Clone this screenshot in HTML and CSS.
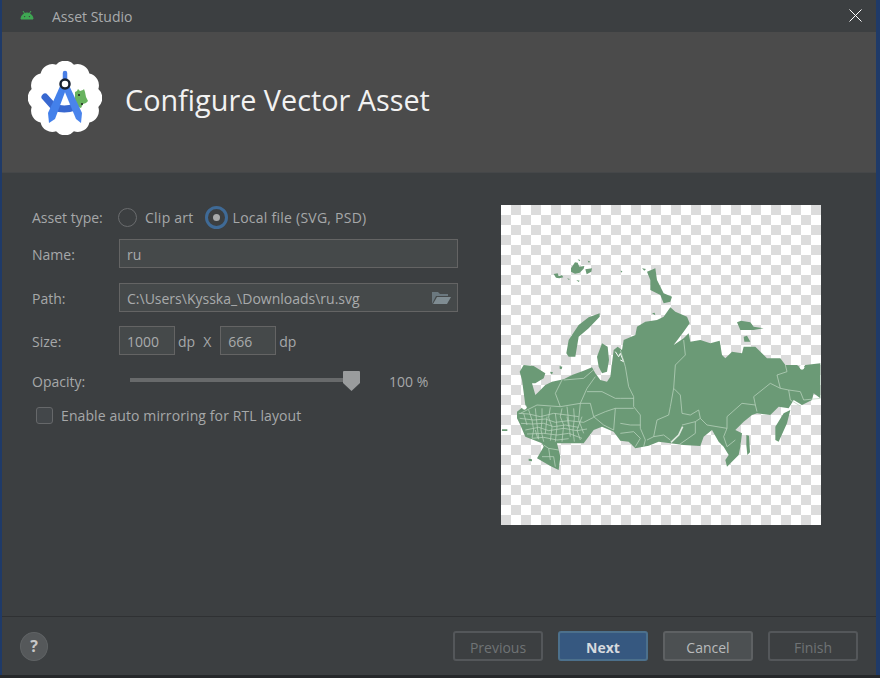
FILE: index.html
```html
<!DOCTYPE html>
<html lang="en">
<head>
<meta charset="utf-8">
<title>Asset Studio</title>
<link rel="stylesheet" href="styles.css">
</head>
<body>
<div class="window">
  <header class="titlebar">
    <svg class="bot" viewBox="0 0 14 10" width="14" height="10"><path fill="#3fa853" d="M1 9a6 6 0 0 1 12 0zM3 1l2 3M11 1L9 4" stroke="#3fa853" stroke-width="1"/><circle cx="4.600" cy="6.600" r=".7" fill="#3c3f41"/><circle cx="9.400" cy="6.600" r=".7" fill="#3c3f41"/></svg>
    <span class="wintitle">Asset Studio</span>
    <svg class="close" viewBox="0 0 13 13" width="13" height="13"><path d="M.5.5l12 12M12.500.5l-12 12" stroke="#fff" stroke-width="1" fill="none"/></svg>
  </header>
  <section class="banner">
    <svg class="logo" viewBox="0 0 74 74" width="74" height="74">
      <path fill="#fff" d="M45.930 3.670A12 12 0 0 1 61.400 12.600A12 12 0 0 1 70.330 28.070A12 12 0 0 1 70.330 45.930A12 12 0 0 1 61.400 61.400A12 12 0 0 1 45.930 70.330A12 12 0 0 1 28.070 70.330A12 12 0 0 1 12.600 61.400A12 12 0 0 1 3.670 45.930A12 12 0 0 1 3.670 28.070A12 12 0 0 1 12.600 12.600A12 12 0 0 1 28.070 3.670A12 12 0 0 1 45.930 3.670Z"/>
      <path fill="#68b35f" d="M47 31l2-1 1-2 2 2 3-1 1-1 1 3 1 5 2 4-2 2-3 1-2 4-6-2z"/>
      <circle cx="51" cy="34" r="1" fill="#222"/><circle cx="54" cy="43" r="1" fill="#222"/>
      <path fill="none" stroke="#4a7fe6" stroke-width="4.500" stroke-linecap="round" d="M37 12v8"/>
      <path fill="none" stroke="#3868d0" stroke-width="7" stroke-linecap="round" d="M17 36l9 10q10 4 21 0"/>
      <path fill="#4380ea" d="M33 23h7l-13 35-6 4-1-10z"/>
      <path fill="#4a84ec" d="M34 24l6-2 14 30-1 10-5-4z"/>
      <circle cx="37" cy="23" r="4.500" fill="#fff" stroke="#17202e" stroke-width="2.500"/>
    </svg>
    <h1 class="heading">Configure Vector Asset</h1>
  </section>
  <main class="content">
    <form class="form">
      <div class="row row-type">
        <span class="label">Asset type:</span>
        <span class="radio"></span><span class="opt opt-clip">Clip art</span>
        <span class="radio-on"><span class="radio-dot"></span></span><span class="opt opt-local">Local file (SVG, PSD)</span>
      </div>
      <div class="row row-name">
        <span class="label">Name:</span>
        <div class="input wide">ru</div>
      </div>
      <div class="row row-path">
        <span class="label">Path:</span>
        <div class="input wide pathbox">
          <span>C:\Users\Kysska_\Downloads\ru.svg</span>
          <svg viewBox="0 0 20 14" width="20" height="14"><path fill="#6b787f" d="M1 13V1h6l2 2h8v2H5z"/><path fill="#7f8c92" d="M2 13l4-7h14l-4 7z"/></svg>
        </div>
      </div>
      <div class="row row-size">
        <span class="label">Size:</span>
        <div class="input small">1000</div><span class="unit">dp</span><span class="unit x">X</span>
        <div class="input small">666</div><span class="unit">dp</span>
      </div>
      <div class="row row-opacity">
        <span class="label label-op">Opacity:</span>
        <div class="track"></div>
        <svg class="thumb" viewBox="0 0 17 20" width="17" height="20"><path fill="#9a9c9d" d="M1 0h15a1 1 0 0 1 1 1v11l-8.500 8L0 12V1a1 1 0 0 1 1-1z"/></svg>
        <span class="pct">100 %</span>
      </div>
      <div class="row row-check">
        <span class="checkbox"></span><span class="opt opt-rtl">Enable auto mirroring for RTL layout</span>
      </div>
    </form>
    <div class="preview">
      <svg class="map" viewBox="2 15 960 960" width="320" height="320">
        <g fill="#6b9a76">
          <path d="M58 515L70 495L100 498L135 520L130 535L105 550L95 550L105 585L115 575L135 555L155 545L190 538L215 525L250 512L275 502L285 520L300 540L320 545L330 530L335 490L340 450L352 440L365 450L370 420L405 405L410 380L435 365L470 360L490 350L510 322L525 335L560 350L568 370L550 395L520 435L550 415L565 400L570 425L600 420L630 430L658 422L665 465L675 475L695 455L725 460L730 440L765 440L800 475L840 475L855 495L890 495L905 507L915 495L960 490L960 595L940 580L935 600L905 615L880 600L865 625L835 620L810 645L770 640L755 645L730 665L705 690L725 700L720 740L715 765L680 800L675 780L685 765L670 740L655 725L635 690L610 710L600 738L550 735L510 730L475 725L445 737L405 745L385 725L360 722L340 695L305 680L280 690L250 730L170 730L180 770L175 810L150 798L110 775L130 740L125 730L100 720L75 710L60 675L50 655L50 635L75 615L65 540Z"/>
          <path d="M198 460L205 420L235 375L265 352L298 340L298 350L265 385L235 410L225 470L205 470Z"/>
          <path d="M290 470L305 430L322 440L326 480L320 515L305 520L295 500Z"/>
          <path d="M440 215L465 205L470 240L490 280L515 290L510 305L490 310L480 285L450 270L450 240Z"/>
          <path d="M710 367L722 362L750 367L760 380L790 385L760 390L720 390ZM730 410L740 407L750 425L732 425Z"/>
          <path d="M825 680L850 640L870 630L860 670L835 725L825 720ZM738 705L746 707L749 757L741 765L738 735ZM5 688H21V693H5ZM85 776L95 778V784L85 782ZM178 498L186 500L184 508L178 506ZM150 515L158 517L155 523L150 520ZM455 340L463 338L465 346ZM425 205L437 207L432 212Z"/>
          <path d="M160 222L172 220L175 228L185 226L189 232L177 235L167 233ZM212 205L224 187L232 188L237 200L252 198L250 206L238 218L224 221L212 215ZM232 178L240 180L237 184ZM262 182L269 184L266 189ZM255 208L275 205L273 215L259 223ZM200 235L208 237L206 240ZM228 240L238 242L235 246ZM360 212L366 213L364 218Z"/>
        </g>
        <g fill="none" stroke="#fff">
          <path stroke-width="3" d="M345 455l10 15 5-10 10 25-10-5"/>
          <circle cx="72" cy="622" r="7" fill="#fff" stroke="none"/>
          <circle cx="905" cy="502" r="7" fill="#fff" stroke="none"/>
          <path stroke-width="5" stroke="#dfeae0" d="M512 727L535 705L547 680"/>
        </g>
        <g fill="none" stroke="#bcd5c0" stroke-width="2.200" stroke-linejoin="round">
          <path d="M550 420L555 465L525 495L520 565L540 585L545 640L570 645L595 630L600 655L620 675L680 685L680 650L725 610L765 615L760 590L810 550L840 565L830 525L860 515L855 495M520 565L510 620L505 645L470 660L460 710L440 720M840 565L865 570L900 575L910 600L960 595M865 570L870 600L900 618M680 685L670 710L680 740L705 720M765 615L770 635M460 710L490 705L510 720M545 675L585 665L600 655M585 665L585 700L535 735"/>
          <path d="M360 450L375 500L385 560L400 590V620L420 645V685L435 720L430 740M360 595H400M345 625H400M360 670L390 675L420 675M360 700L400 695L420 715L405 740M345 625L340 690"/>
          <path d="M190 540L250 535L285 505M185 540L165 580L180 620M110 615L180 620L240 610M60 640L110 615M240 610L260 565L285 530M260 575L305 575L345 595L360 595M240 610L235 660L250 700M200 620L210 710M240 610L270 610L280 650L315 635L345 625M280 650L310 675L340 690"/>
          <path d="M55 640L85 642L120 650L160 640L200 645L235 650M58 655L100 660L135 657L165 667L205 662L250 667L280 652M62 670L95 672L130 670L160 680L195 675L235 682M75 690L115 682L145 692L190 685L230 692L260 687M80 702L130 700L170 705L205 700L245 715M95 715L130 712L170 720L205 716M85 630L95 660L100 690L95 715M105 625L108 655L112 690L115 718M125 625L125 660L122 690L130 725M150 622L145 652L155 682L150 722M165 640L170 680L165 725M185 625L180 650L190 675L185 725M220 625L222 655L218 690L222 725M245 650L230 690L240 720M130 735L145 745L150 780M145 745L175 750M125 770L160 770L165 800M70 640L80 675M140 650L135 700M105 690L112 715M200 650L205 680"/>
        </g>
      </svg>
    </div>
  </main>
  <footer class="footer">
    <span class="help">?</span>
    <div class="buttons">
      <span class="btn off">Previous</span>
      <span class="btn primary">Next</span>
      <span class="btn normal">Cancel</span>
      <span class="btn off">Finish</span>
    </div>
  </footer>
</div>
</body>
</html>
```
FILE: styles.css
```css
* { box-sizing: border-box; }
html, body { margin: 0; height: 100%; }
body { background: linear-gradient(to bottom, #1f3a68 675px, #26282a 675px); overflow: hidden; font-family: "Open Sans", "Noto Sans", sans-serif; font-size: 14px; color: #a6a8a9; }
.window { margin-left: 2px; width: 874px; height: 675px; background: #3c3f41; display: flex; flex-direction: column; }
.titlebar { height: 32px; flex: none; display: flex; align-items: center; padding-left: 18px; padding-right: 14px; }
.bot { margin-right: 18px; margin-top: -2px; }
.wintitle { color: #a9abac; font-size: 14px; margin-top: 1px; }
.close { margin-left: auto; margin-top: -1px; }
.banner { height: 141px; flex: none; background: #4b4b4b; display: flex; align-items: center; padding-left: 26px; padding-bottom: 6px; gap: 23px; border-bottom: 1px solid #454749; }
.logo { margin-top: -2px; flex: none; }
.heading { margin: 0; font-weight: 400; font-size: 28.800px; color: #f2f2f2; }
.content { flex: 1; display: flex; border-bottom: 1px solid #2f3133; padding-top: 32px; }
.form { width: 499px; flex: none; padding-left: 30px; }
.row { display: flex; align-items: center; }
.label { width: 87px; flex: none; padding-top: 2px; }
.row-type { height: 25px; }
.row-type .label { padding-top: 0; }
.radio { width: 19px; height: 19px; border: 1px solid #6a6c6e; border-radius: 50%; margin-left: -1px; flex: none; }
.opt-clip { margin-left: 8px; margin-right: 11px; letter-spacing: .25px; }
.opt-local { letter-spacing: .25px; }
.opt-rtl { letter-spacing: .1px; }
.radio-on { width: 23px; height: 23px; border-radius: 50%; border: 3px solid #3f6a96; background: #3c3f41; display: flex; align-items: center; justify-content: center; margin-right: 5px; flex: none; }
.radio-dot { width: 7px; height: 7px; border-radius: 50%; background: #a8aaab; }
.row-name { margin-top: 9px; }
.row-path { margin-top: 15px; }
.row-size { margin-top: 14px; }
.input { height: 29px; background: #45494a; border: 1px solid #646464; padding-left: 7px; padding-top: 1px; display: flex; align-items: center; color: #a9abac; }
.wide { width: 339px; }
.small { width: 56px; }
.pathbox { justify-content: space-between; padding-right: 6px; }
.unit { margin-left: 3px; padding-top: 2px; }
.unit.x { margin-left: 8px; margin-right: 9px; }
.row-opacity { margin-top: 16px; height: 20px; }
.label-op { width: 98px; padding-top: 0; }
.track { width: 214px; height: 4px; background: #686a6b; margin-top: -3px; }
.thumb { margin-left: -1px; flex: none; }
.pct { margin-left: 29px; }
.row-check { margin-top: 15px; padding-left: 4px; height: 18px; }
.checkbox { width: 17px; height: 17px; border: 1px solid #66686a; border-radius: 3px; background: #43474a; margin-right: 8px; flex: none; }
.preview { width: 320px; height: 320px; background: conic-gradient(#dcdcdc 25%, #fff 0 50%, #dcdcdc 0 75%, #fff 0) 0 0 / 20px 20px; flex: none; }
.map { display: block; }
.footer { height: 58px; flex: none; display: flex; align-items: center; justify-content: space-between; padding: 0 18px; }
.help { width: 28px; height: 29px; border-radius: 50%; background: #55585a; color: #c8c8c8; display: flex; align-items: center; justify-content: center; font-weight: 700; font-size: 16px; border: 1px solid #5f6264; }
.buttons { display: flex; gap: 15px; }
.btn { width: 90px; height: 30px; border-radius: 3px; display: flex; align-items: center; justify-content: center; font-size: 14px; padding-top: 2px; border: 2px solid #54575a; }
.off { color: #6f7375; background: #3c3f41; }
.normal { background: #4c5052; border-color: #5e6163; color: #b9bbbc; }
.primary { background: #365880; border-color: #4c708c; color: #d6dade; font-weight: 700; }
```
